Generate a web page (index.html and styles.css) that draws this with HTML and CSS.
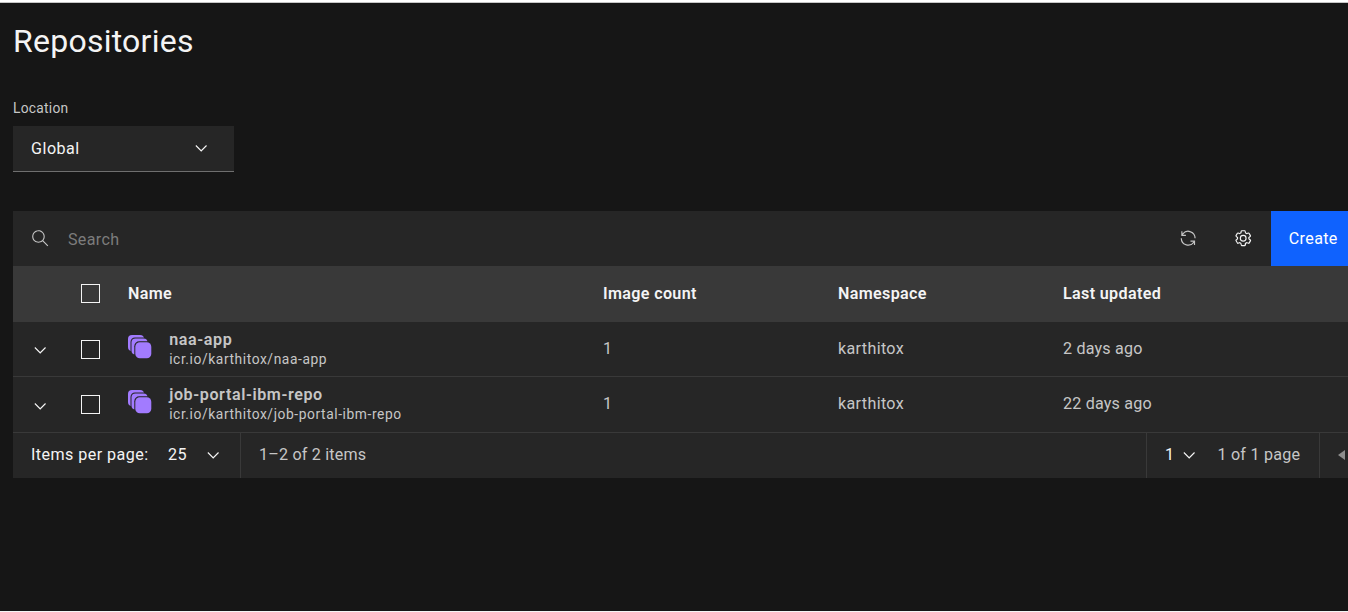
FILE: index.html
```html
<!DOCTYPE html>
<html lang="en">
<head>
<meta charset="utf-8">
<title>Repositories</title>
<link rel="stylesheet" href="styles.css">
</head>
<body>
<svg class="defs" aria-hidden="true">
  <symbol id="chevron" viewBox="0 0 16 16"><path d="M8 11L3 6 3.7 5.3 8 9.6 12.3 5.3 13 6z"/></symbol>
  <symbol id="stack" viewBox="0 0 24 24">
    <rect x="0" y="0" width="16" height="16" rx="4"/>
    <rect class="cut" x="2.500" y="2.500" width="17" height="17" rx="4.500"/>
    <rect x="3.500" y="3.500" width="16" height="16" rx="4"/>
    <rect class="cut" x="6.300" y="6.300" width="18" height="18" rx="5"/>
    <rect x="7.300" y="7.300" width="16" height="16" rx="4.500"/>
  </symbol>
</svg>
<main class="page">
  <h1>Repositories</h1>
  <label class="label">Location</label>
  <div class="dropdown"><span>Global</span><svg class="icon"><use href="#chevron"/></svg></div>

  <section class="table">
    <div class="toolbar">
      <svg class="icon search" viewBox="0 0 16 16"><path d="M15 14.3L10.7 10c1.9-2.3 1.6-5.8-.7-7.7S4.2.7 2.3 3 .7 8.8 3 10.7c2 1.7 5 1.7 7 0l4.3 4.3.7-.7zM2 6.500C2 4 4 2 6.500 2S11 4 11 6.500 9 11 6.500 11 2 9 2 6.500z"/></svg>
      <span class="placeholder">Search</span>
      <span class="tool"><svg class="icon dim" viewBox="0 0 32 32"><path d="M12 10H6.780A11 11 0 0 1 27 16h2A13 13 0 0 0 6 7.680V4H4v8h8zM20 22h5.220A11 11 0 0 1 5 16H3a13 13 0 0 0 23 8.320V28h2v-8h-8z"/></svg></span>
      <span class="tool"><svg class="icon" viewBox="0 0 16 16"><path fill-rule="evenodd" d="M13.500 8.400V7.600l1-.8c.4-.3.4-.9.2-1.300l-1.200-2C13.300 3.200 13 3 12.600 3c-.1 0-.2 0-.3.1l-1.200.4c-.2-.1-.4-.3-.7-.4l-.3-1.300C10.100 1.300 9.700 1 9.200 1H6.800c-.5 0-.9.3-1 .8L5.600 3.100c-.3.1-.5.2-.7.3L3.700 3H3.400c-.4 0-.7.2-.9.5l-1.200 2c-.2.4-.1.9.3 1.300l.9.9v.8l-.9.700c-.4.3-.5.9-.2 1.300l1.200 2c.1.3.4.5.8.5.1 0 .2 0 .3-.1l1.200-.4c.2.1.4.3.7.4l.3 1.300c.1.5.5.8 1 .8h2.400c.5 0 .9-.3 1-.8l.3-1.300c.2-.1.4-.2.7-.4l1.200.4c.1 0 .2.100.3.100.4 0 .7-.2.9-.5l1.100-2c.2-.4.2-.9-.2-1.300zM12.600 12l-1.700-.6c-.4.3-.9.6-1.400.8L9.200 14H6.800l-.4-1.800c-.5-.2-.9-.5-1.400-.8L3.400 12l-1.200-2 1.400-1.200c-.1-.5-.1-1.100 0-1.600L2.200 6l1.200-2 1.700.6c.4-.4.9-.6 1.400-.8L6.800 2h2.400l.4 1.800c.5.2.9.5 1.400.8L12.600 4l1.200 2-1.400 1.200c.1.5.1 1.100 0 1.600l1.400 1.200zM8 11a3 3 0 1 1 0-6 3 3 0 0 1 0 6zM8 6a2 2 0 1 0 0 4 2 2 0 0 0 0-4z"/></svg></span>
      <span class="create">Create</span>
    </div>

    <div class="row head">
      <span></span><i class="check"></i>
      <b>Name</b><b>Image count</b><b>Namespace</b><b>Last updated</b>
    </div>
    <div class="row">
      <svg class="icon"><use href="#chevron"/></svg><i class="check"></i>
      <div class="repo"><svg class="stack"><use href="#stack"/></svg><div><strong>naa-app</strong><small>icr.io/karthitox/naa-app</small></div></div>
      <span>1</span><span>karthitox</span><span class="date">2 days ago</span>
    </div>
    <div class="row">
      <svg class="icon"><use href="#chevron"/></svg><i class="check"></i>
      <div class="repo"><svg class="stack"><use href="#stack"/></svg><div><strong>job-portal-ibm-repo</strong><small>icr.io/karthitox/job-portal-ibm-repo</small></div></div>
      <span>1</span><span>karthitox</span><span class="date">22 days ago</span>
    </div>

    <div class="pagination">
      <div class="size"><span class="bright per">Items per page:</span><span class="bright num">25</span><svg class="icon"><use href="#chevron"/></svg></div>
      <span class="range">1–2 of 2 items</span>
      <div class="pager"><span class="bright current">1</span><svg class="icon"><use href="#chevron"/></svg><span class="pages">1 of 1 page</span></div>
      <div class="prev"><svg viewBox="0 0 7 10"><path d="M7 0v10L0 5z"/></svg></div>
    </div>
  </section>
</main>
</body>
</html>
```
FILE: styles.css
```css
* { box-sizing: border-box; }
body {
  margin: 0;
  height: 612px;
  overflow: hidden;
  background: #161616;
  border-top: 2px solid #fff;
  border-bottom: 1px solid #f4f4f4;
  color: #c6c6c6;
  font: 16.1px/20px Roboto, "Liberation Sans", sans-serif;
  letter-spacing: .35px;
}
.defs { position: absolute; width: 0; height: 0; }
.page { padding-left: 13px; border-top: 1px solid #c6c6c6; height: 100%; }
h1 {
  margin: 0;
  padding-top: 17px;
  color: #f4f4f4;
  font-size: 32px;
  font-weight: 400;
  line-height: 42px;
  letter-spacing: .25px;
}
.label { display: block; margin-top: 37px; font-size: 13.8px; line-height: 18px; letter-spacing: .25px; }
.dropdown {
  display: flex;
  align-items: center;
  justify-content: space-between;
  width: 221px;
  height: 46px;
  margin-top: 9px;
  padding: 0 23.500px 0 18px;
  background: #262626;
  border-bottom: 1px solid #6f6f6f;
  color: #f4f4f4;
  letter-spacing: .5px;
}
.icon { width: 18.4px; height: 18.4px; fill: #f4f4f4; flex: none; }
.icon.search, .icon.dim { fill: #c6c6c6; }
.table { width: 1390px; margin-top: 39px; background: #262626; }
.toolbar { display: flex; align-items: center; height: 55px; padding-left: 18px; }
.placeholder { flex: none; width: 1111px; padding: 2px 0 0 18.500px; color: #7c7c7c; }
.tool { display: flex; flex: none; justify-content: center; width: 55.2px; }
.create { display: flex; align-items: center; flex: 1; height: 55px; padding-left: 18px; background: #0f62fe; color: #fff; }
.row {
  display: grid;
  grid-template-columns: 50px 47px 475px 235px 225px 1fr;
  align-items: center;
  height: 55.250px;
  padding-left: 18px;
  border-bottom: 1px solid #393939;
}
.row.head { height: 56px; background: #393939; color: #f4f4f4; }
.row b, .row strong { font-weight: 600; }
.check { width: 19px; height: 19px; margin-top: 1px; border: 1px solid #f4f4f4; }
.head .check { margin-top: 0; }
.row .icon { margin-top: 3px; }
.date { letter-spacing: .2px; }
.repo { display: flex; align-items: center; }
.repo strong { display: block; line-height: 20px; letter-spacing: .6px; }
.repo small { display: block; font-size: 13.8px; line-height: 18px; letter-spacing: .58px; }
.stack { width: 24px; height: 24px; margin: 0 17.200px 4px 0; fill: #a27bff; }
.cut { fill: #262626; }
.pagination { display: flex; align-items: stretch; height: 45.500px; }
.pagination > * { display: flex; align-items: center; border-right: 1px solid #393939; }
.bright { color: #f4f4f4; }
.size { width: 228px; padding-left: 18px; }
.per { width: 137px; letter-spacing: .45px; }
.num { width: 36px; }
.range { width: 906px; padding-left: 18px; letter-spacing: .2px; }
.pager { width: 173px; padding-left: 18px; }
.current { width: 15px; }
.pages { margin-left: 19px; letter-spacing: .25px; }
.prev { padding-left: 18px; }
.prev svg { width: 7px; height: 10px; fill: #8d8d8d; }
.pagination .prev { border: 0; }
```
